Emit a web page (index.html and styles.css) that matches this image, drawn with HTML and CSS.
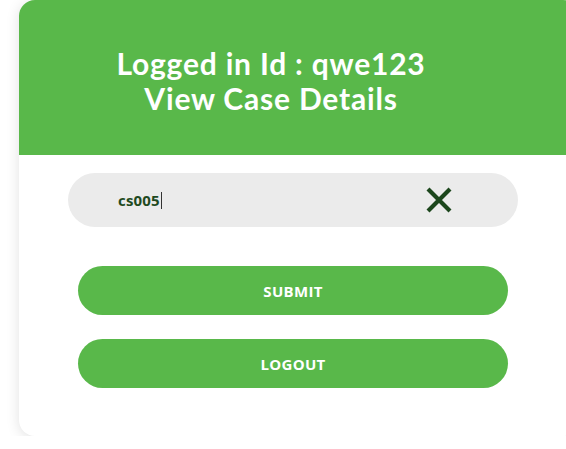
FILE: index.html
```html
<!DOCTYPE html>
<html lang="en">
<head>
    <meta charset="UTF-8">
    <meta name="viewport" content="width=device-width, initial-scale=1.0">
    <title>View Case Details</title>
    <link rel="stylesheet" href="styles.css">
</head>
<body>

<div class="card">
    <!-- Шапка карточки -->
    <div class="card-header">
        <h2>Logged in Id : qwe123<br>View Case Details</h2>
    </div>

    <div class="card-body">
        <!-- Поле поиска дела -->
        <div class="search-box">
            <span class="search-text">cs005</span><span class="caret"></span>
            <button class="clear-btn" title="Clear">
                <svg width="30" height="26" viewBox="0 0 30 26">
                    <path d="M4 2 L26 24 M26 2 L4 24" stroke="#1c461c" stroke-width="4.2" fill="none"/>
                </svg>
            </button>
        </div>

        <button class="btn">SUBMIT</button>
        <button class="btn">LOGOUT</button>
    </div>
</div>

</body>
</html>
```

FILE: styles.css
```css
/* Основные стили */
body {
    margin: 0;
    padding: 0;
    background: #fff;
    font-family: "Open Sans", Arial, sans-serif;
}

.card {
    margin-left: 19px;
    width: 560px;
    height: 436px;
    border-radius: 16px;
    background: #fff;
    box-shadow: 0 2px 14px rgba(0, 0, 0, 0.12);
    overflow: hidden;
}

.card-header {
    height: 155px;
    background-color: #59b84a;
    display: flex;
    align-items: center;
    justify-content: center;
    padding-right: 56px;
    box-sizing: border-box;
}

.card-header h2 {
    margin: 0;
    padding-top: 7px;
    color: #fff;
    font-family: Lato, "Open Sans", sans-serif;
    font-weight: 700;
    font-size: 30px;
    line-height: 35px;
    text-align: center;
    letter-spacing: 0.8px;
}

.card-body {
    padding: 18px 0 0 49px;
    display: flex;
    flex-direction: column;
}

.search-box {
    width: 450px;
    height: 54px;
    border-radius: 27px;
    background: #ebebeb;
    display: flex;
    align-items: center;
    padding-left: 50px;
    box-sizing: border-box;
}

.search-text {
    font-family: "Open Sans", sans-serif;
    font-weight: 700;
    font-size: 15px;
    letter-spacing: 0.2px;
    color: #1f4a1f;
}

.caret {
    width: 1px;
    height: 17px;
    background: #333;
    margin-left: 1px;
}

.clear-btn {
    margin-left: auto;
    margin-right: 64px;
    border: none;
    background: none;
    padding: 0;
    display: flex;
    cursor: pointer;
}

.btn {
    width: 430px;
    height: 49px;
    margin-left: 10px;
    margin-top: 24px;
    border: none;
    border-radius: 25px;
    background-color: #59b84a;
    color: #fff;
    font-family: "Open Sans", sans-serif;
    font-weight: 700;
    font-size: 15px;
    letter-spacing: 0.3px;
    cursor: pointer;
}

.search-box + .btn {
    margin-top: 39px;
}
```
